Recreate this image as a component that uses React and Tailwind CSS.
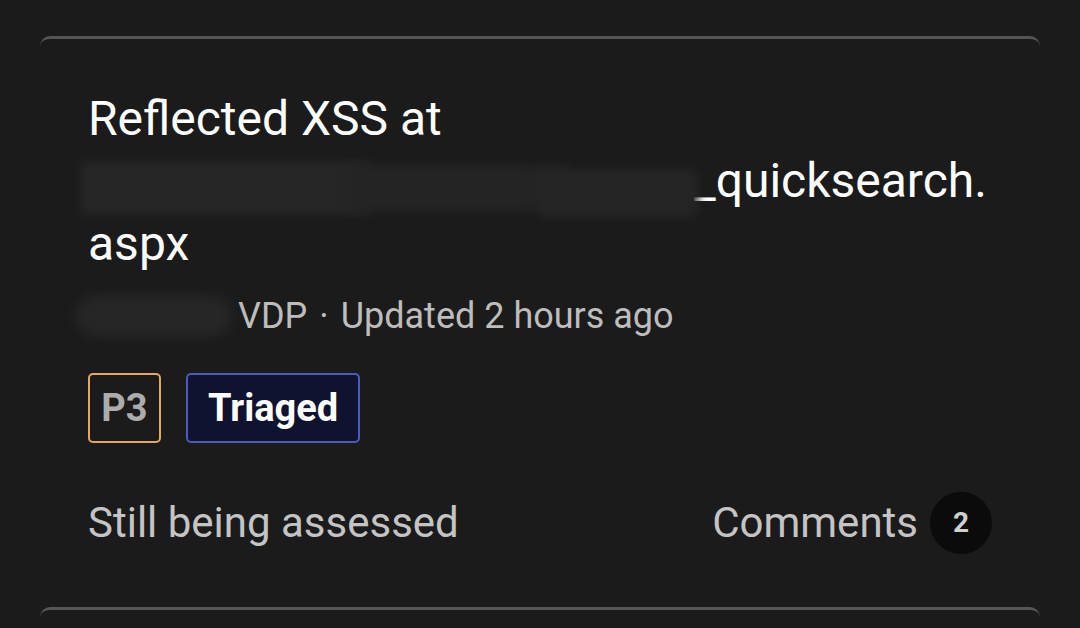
const Blur = ({ className }) => (
  <span
    className={`inline-block rounded-full bg-[#262626] blur-[6px] align-middle ${className}`}
  ></span>
);

const ReportCard = () => {
  return (
    <div className="mx-10 mt-9 rounded-t-[10px] border-t-[3px] border-[#555555] px-12 pt-[49px] pb-[53px]">
      {/* Title */}
      <h2 className="text-[48px] leading-[62px] font-normal text-white">
        Reflected XSS at
        <br />
        <span className="whitespace-nowrap">
          <span className="relative inline-block w-[606px] h-[56px] align-[-16px]">
            <span className="absolute left-[-8px] top-[4px] w-[290px] h-[54px] rounded-md bg-[#262626] blur-[5px]"></span>
            <span className="absolute left-[260px] top-[8px] w-[220px] h-[46px] rounded-md bg-[#242424] blur-[5px]"></span>
            <span className="absolute left-[450px] top-[12px] w-[160px] h-[48px] rounded-md bg-[#252525] blur-[5px]"></span>
          </span>
          _quicksearch.
        </span>
        <br />
        aspx
      </h2>

      {/* Meta */}
      <div className="mt-[19px] flex items-center text-[36px] leading-[44px] text-[#bdbdbd]">
        <Blur className="w-[158px] h-[42px] mr-[5px] -ml-[13px]" />
        <span>VDP</span>
        <span className="mx-[12px]">·</span>
        <span>Updated 2 hours ago</span>
      </div>

      {/* Badges */}
      <div className="mt-[35px] flex items-center gap-[25px]">
        <span className="flex h-[70px] w-[73px] items-center justify-center rounded-[5px] border-2 border-[#e6a860] text-[38px] font-bold text-[#acacac]">
          P3
        </span>
        <span className="flex h-[70px] items-center rounded-[5px] border-2 border-[#4b5cb8] bg-[#10132f] px-[20px] text-[38px] font-bold text-white">
          Triaged
        </span>
      </div>

      {/* Footer */}
      <div className="mt-[49px] flex h-[62px] items-center justify-between">
        <span className="text-[42px] leading-[62px] text-[#c4c4c4]">Still being assessed</span>
        <div className="flex items-center gap-[12px]">
          <span className="text-[42px] leading-[62px] text-[#c4c4c4]">Comments</span>
          <span className="flex h-[62px] w-[62px] items-center justify-center rounded-full bg-[#0b0b0b] text-[28px] font-bold text-[#d0d0d0]">
            2
          </span>
        </div>
      </div>
    </div>
  );
};

export default function App() {
  return (
    <div
      className="h-[628px] w-[1080px] overflow-hidden bg-[#1b1b1b]"
      style={{ fontFamily: 'Roboto, "Liberation Sans", sans-serif' }}
    >
      <ReportCard />
      <div className="mx-10 h-8 rounded-t-[10px] border-t-[3px] border-[#555555]"></div>
    </div>
  );
}
